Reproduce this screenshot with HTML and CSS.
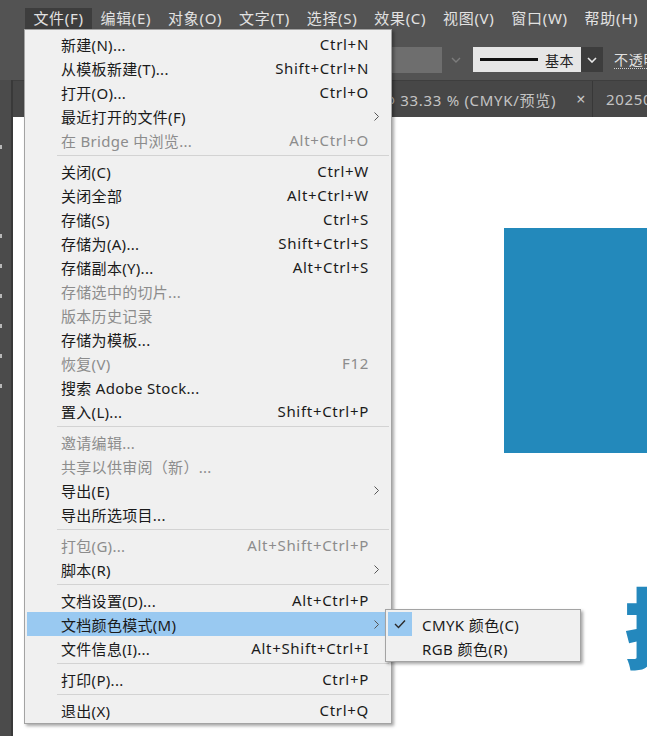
FILE: index.html
```html
<!DOCTYPE html>
<html lang="zh-CN">
<head>
<meta charset="utf-8">
<title>Illustrator 文件菜单</title>
<link rel="stylesheet" href="styles.css">
</head>
<body>
<div class="app">
  <div class="menubar">
    <span class="mb-item active">文件(F)</span>
    <span class="mb-item">编辑(E)</span>
    <span class="mb-item">对象(O)</span>
    <span class="mb-item">文字(T)</span>
    <span class="mb-item">选择(S)</span>
    <span class="mb-item">效果(C)</span>
    <span class="mb-item">视图(V)</span>
    <span class="mb-item">窗口(W)</span>
    <span class="mb-item">帮助(H)</span>
  </div>

  <div class="controlbar">
    <div class="fill-swatch"></div>
    <div class="cb-chev"><svg width="10" height="6" viewBox="0 0 10 6"><polyline points="1,1 5,5 9,1" fill="none" stroke="#7c7c7c" stroke-width="1.4"/></svg></div>
    <div class="stroke-box"><span class="stroke-line"></span><span class="stroke-label">基本</span></div>
    <div class="stroke-drop"><svg width="10" height="6" viewBox="0 0 10 6"><polyline points="1,1 5,5 9,1" fill="none" stroke="#e8e8e8" stroke-width="1.6"/></svg></div>
    <span class="opacity-label">不透明度</span>
  </div>

  <div class="workspace">
    <div class="toolstrip">
      <span class="tick t1"></span>
      <span class="tick"></span>
      <span class="tick"></span>
      <span class="tick"></span>
      <span class="tick"></span>
      <span class="tick"></span>
      <span class="tick"></span>
    </div>
    <div class="main">
      <div class="tabbar">
        <div class="tab active"><span class="tab-title">未标题-1 @ 33.33 % (CMYK/预览)</span><span class="tab-close">×</span></div>
        <div class="tab"><span class="tab-title">20250312.ai @ 33.33 %</span></div>
      </div>
      <div class="canvas">
        <div class="art-rect"></div>
        <div class="art-char">技</div>
      </div>
    </div>
  </div>

  <div class="dropdown">
    <div class="mi"><span class="lbl">新建(N)...</span><span class="sc">Ctrl+N</span><span class="ar"></span></div>
    <div class="mi"><span class="lbl">从模板新建(T)...</span><span class="sc">Shift+Ctrl+N</span><span class="ar"></span></div>
    <div class="mi"><span class="lbl">打开(O)...</span><span class="sc">Ctrl+O</span><span class="ar"></span></div>
    <div class="mi"><span class="lbl">最近打开的文件(F)</span><span class="sc"></span><span class="ar"><svg width="5" height="9" viewBox="0 0 5 9"><polyline points="0.5,0.5 4.5,4.5 0.5,8.5" fill="none" stroke="#555" stroke-width="1"/></svg></span></div>
    <div class="mi dis"><span class="lbl">在 Bridge 中浏览...</span><span class="sc">Alt+Ctrl+O</span><span class="ar"></span></div>
    <div class="sep"></div>
    <div class="mi"><span class="lbl">关闭(C)</span><span class="sc">Ctrl+W</span><span class="ar"></span></div>
    <div class="mi"><span class="lbl">关闭全部</span><span class="sc">Alt+Ctrl+W</span><span class="ar"></span></div>
    <div class="mi"><span class="lbl">存储(S)</span><span class="sc">Ctrl+S</span><span class="ar"></span></div>
    <div class="mi"><span class="lbl">存储为(A)...</span><span class="sc">Shift+Ctrl+S</span><span class="ar"></span></div>
    <div class="mi"><span class="lbl">存储副本(Y)...</span><span class="sc">Alt+Ctrl+S</span><span class="ar"></span></div>
    <div class="mi dis"><span class="lbl">存储选中的切片...</span><span class="sc"></span><span class="ar"></span></div>
    <div class="mi dis"><span class="lbl">版本历史记录</span><span class="sc"></span><span class="ar"></span></div>
    <div class="mi"><span class="lbl">存储为模板...</span><span class="sc"></span><span class="ar"></span></div>
    <div class="mi dis"><span class="lbl">恢复(V)</span><span class="sc">F12</span><span class="ar"></span></div>
    <div class="mi"><span class="lbl">搜索 Adobe Stock...</span><span class="sc"></span><span class="ar"></span></div>
    <div class="mi"><span class="lbl">置入(L)...</span><span class="sc">Shift+Ctrl+P</span><span class="ar"></span></div>
    <div class="sep"></div>
    <div class="mi dis"><span class="lbl">邀请编辑...</span><span class="sc"></span><span class="ar"></span></div>
    <div class="mi dis"><span class="lbl">共享以供审阅（新）...</span><span class="sc"></span><span class="ar"></span></div>
    <div class="mi"><span class="lbl">导出(E)</span><span class="sc"></span><span class="ar"><svg width="5" height="9" viewBox="0 0 5 9"><polyline points="0.5,0.5 4.5,4.5 0.5,8.5" fill="none" stroke="#555" stroke-width="1"/></svg></span></div>
    <div class="mi"><span class="lbl">导出所选项目...</span><span class="sc"></span><span class="ar"></span></div>
    <div class="sep"></div>
    <div class="mi dis"><span class="lbl">打包(G)...</span><span class="sc">Alt+Shift+Ctrl+P</span><span class="ar"></span></div>
    <div class="mi"><span class="lbl">脚本(R)</span><span class="sc"></span><span class="ar"><svg width="5" height="9" viewBox="0 0 5 9"><polyline points="0.5,0.5 4.5,4.5 0.5,8.5" fill="none" stroke="#555" stroke-width="1"/></svg></span></div>
    <div class="sep"></div>
    <div class="mi"><span class="lbl">文档设置(D)...</span><span class="sc">Alt+Ctrl+P</span><span class="ar"></span></div>
    <div class="mi hl"><span class="lbl">文档颜色模式(M)</span><span class="sc"></span><span class="ar"><svg width="5" height="9" viewBox="0 0 5 9"><polyline points="0.5,0.5 4.5,4.5 0.5,8.5" fill="none" stroke="#555" stroke-width="1"/></svg></span></div>
    <div class="mi"><span class="lbl">文件信息(I)...</span><span class="sc">Alt+Shift+Ctrl+I</span><span class="ar"></span></div>
    <div class="sep"></div>
    <div class="mi"><span class="lbl">打印(P)...</span><span class="sc">Ctrl+P</span><span class="ar"></span></div>
    <div class="sep"></div>
    <div class="mi"><span class="lbl">退出(X)</span><span class="sc">Ctrl+Q</span><span class="ar"></span></div>
  </div>

  <div class="submenu">
    <div class="si"><span class="chk on"><svg width="12" height="10" viewBox="0 0 12 10"><polyline points="1,5 4.5,8.5 11,1.5" fill="none" stroke="#2a2a2a" stroke-width="1.4"/></svg></span><span class="slbl">CMYK 颜色(C)</span></div>
    <div class="si"><span class="chk"></span><span class="slbl">RGB 颜色(R)</span></div>
  </div>
</div>
</body>
</html>
```
FILE: styles.css
```css
* { box-sizing: border-box; }
html, body { margin: 0; padding: 0; }
body {
  width: 647px;
  height: 736px;
  overflow: hidden;
  background: #535353;
  font-family: "Noto Sans", "Noto Sans CJK SC", sans-serif;
  font-size: 15px;
  letter-spacing: 0.7px;
}
.app {
  position: relative;
  width: 647px;
  height: 736px;
  display: flex;
  flex-direction: column;
}

/* menu bar */
.menubar {
  display: flex;
  padding: 8px 0 7px 25px;
  white-space: nowrap;
  flex: none;
}
.mb-item {
  height: 21px;
  line-height: 21px;
  padding: 0 8.4px;
  color: #e2e2e2;
}
.mb-item.active { background: #3d3d3d; }

/* control bar */
.controlbar {
  height: 44px;
  flex: none;
  display: flex;
  align-items: center;
  padding: 3px 0 0 340px;
  white-space: nowrap;
}
.fill-swatch { width: 102px; height: 26px; background: #6e6e6e; flex: none; }
.cb-chev { width: 28px; height: 26px; display: flex; align-items: center; justify-content: center; flex: none; }
.stroke-box {
  margin-left: 3px;
  width: 108px; height: 25px;
  background: #e6e6e6;
  display: flex; align-items: center;
  flex: none;
}
.stroke-line { width: 58px; height: 3px; background: #111; margin-left: 7px; }
.stroke-label { margin-left: 7px; font-size: 14px; color: #222; letter-spacing: 0.5px; }
.stroke-drop {
  width: 22px; height: 25px; background: #3d3d3d;
  display: flex; align-items: center; justify-content: center; flex: none;
}
.opacity-label {
  margin-left: 11px;
  color: #e0e0e0;
  font-size: 14px;
  line-height: 17px;
  border-bottom: 1px dotted #d0d0d0;
}

/* workspace */
.workspace { flex: 1; display: flex; min-height: 0; }
.toolstrip {
  width: 13px;
  flex: none;
  background: #4b4b4b;
  border-right: 2px solid #393939;
  display: flex;
  flex-direction: column;
  gap: 26px;
  padding-top: 65px;
}
.tick { display: block; width: 2px; height: 4px; background: #b8b8b8; }
.tick.t1 { margin-bottom: 59px; }
.main { flex: 1; display: flex; flex-direction: column; min-width: 0; }
.tabbar {
  height: 37px;
  flex: none;
  background: #474747;
  border-top: 1px solid #3e3e3e;
  display: flex;
  white-space: nowrap;
  overflow: hidden;
}
.tab {
  display: flex; align-items: center;
  color: #c4c4c4;
  flex: none;
}
.tab.active {
  width: 580px;
  justify-content: flex-end;
  padding-right: 6px;
  border-right: 1px solid #383838;
}
.tab-close { margin-left: 20px; font-size: 16px; color: #c8c8c8; }
.tab + .tab { padding-left: 13px; }

.canvas {
  flex: 1;
  background: #ffffff;
  position: relative;
  overflow: hidden;
}
.art-rect {
  position: absolute;
  left: 491px; top: 111px;
  width: 170px; height: 225px;
  background: #2389bb;
}
.art-char {
  position: absolute;
  left: 611px; top: 463px;
  font-family: "Noto Sans CJK SC", sans-serif;
  font-weight: 900;
  font-size: 88px;
  line-height: 1;
  letter-spacing: 0;
  color: #2488bd;
}

/* dropdown */
.dropdown {
  position: absolute;
  left: 24px; top: 29px;
  width: 368px;
  background: #f0f0f0;
  border: 1px solid #a3a3a3;
  padding: 2px 5px 1px 2px;
  box-shadow: 2px 2px 3px rgba(0,0,0,0.35);
  z-index: 5;
}
.mi {
  height: 24px;
  display: flex;
  align-items: center;
  padding-left: 34px;
  color: #1a1a1a;
  white-space: nowrap;
}
.mi.dis { color: #8c8c8c; }
.mi.hl { background: #99c9f1; }
.lbl { flex: 1; letter-spacing: 0.3px; }
.sc { text-align: right; }
.ar {
  width: 17px; flex: none;
  display: flex; align-items: center; justify-content: center;
  padding-right: 3px;
}
.sep {
  height: 7px;
  margin: 0 -3px 0 30px;
  display: flex; align-items: center;
}
.sep::before { content: ""; display: block; width: 100%; height: 1px; background: #d3d3d3; }

/* submenu */
.submenu {
  position: absolute;
  left: 385px; top: 609px;
  width: 196px;
  background: #f0f0f0;
  border: 1px solid #a3a3a3;
  padding: 2px 4px 1px 2px;
  box-shadow: 2px 2px 3px rgba(0,0,0,0.35);
  z-index: 6;
}
.si { height: 24px; display: flex; align-items: center; color: #1a1a1a; white-space: nowrap; }
.chk { width: 24px; height: 24px; flex: none; display: flex; align-items: center; justify-content: center; }
.chk.on { background: #99c9f1; }
.slbl { margin-left: 10px; letter-spacing: 0.4px; }
```
